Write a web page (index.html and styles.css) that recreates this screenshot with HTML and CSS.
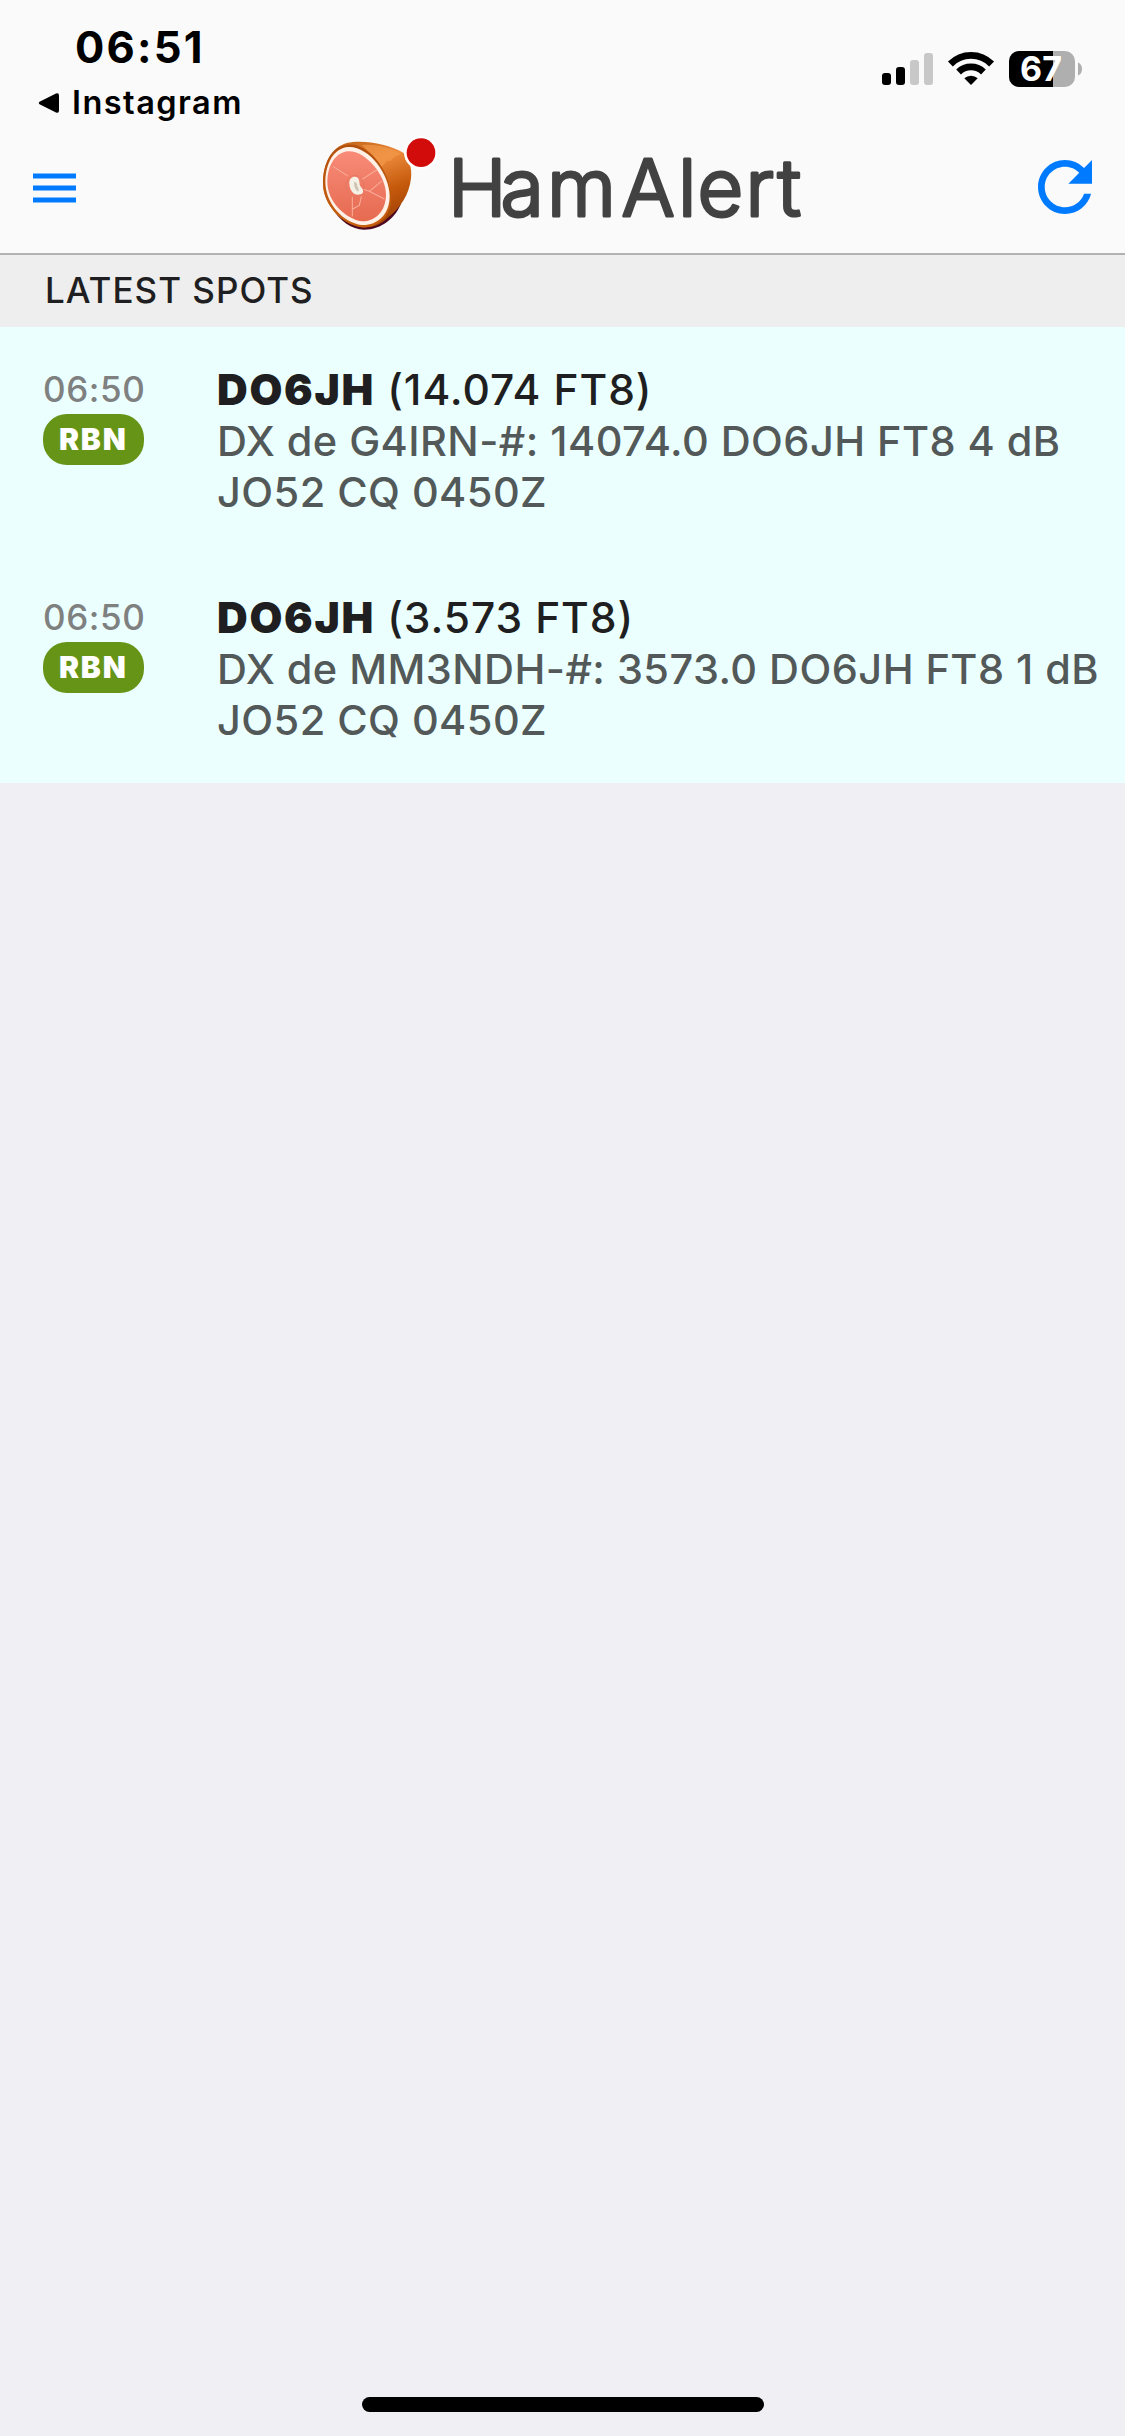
FILE: index.html
```html
<!DOCTYPE html>
<html lang="en">
<head>
<meta charset="utf-8">
<title>HamAlert</title>
<link rel="stylesheet" href="styles.css">
</head>
<body>
<div class="screen">
  <div class="status">
    <div class="status-left">
      <div class="clock">06:51</div>
      <div class="back">
        <svg class="back-arrow" width="22" height="22" viewBox="0 0 22 22"><path d="M2.5 9.2 L18 1.5 Q21 .6 21 3.5 V18.5 Q21 21.6 18 20.5 L2.5 12.8 Q-1 11 2.5 9.2Z"/></svg>
        <span>Instagram</span>
      </div>
    </div>
    <svg class="indicators" width="205" height="38" viewBox="0 0 205 38">
      <rect x="2" y="23" width="9" height="12" rx="3"/>
      <rect x="16" y="17" width="9" height="18" rx="3"/>
      <rect x="30" y="10" width="9" height="25" rx="3" fill="#c8c8c8"/>
      <rect x="44" y="3" width="9" height="32" rx="3" fill="#c8c8c8"/>
      <g fill="none" stroke="#000" stroke-width="6.8">
        <path d="M70.4 14 A28.8 28.8 0 0 1 111.6 14"/>
        <path d="M78.6 22 A17.8 17.8 0 0 1 103.4 22"/>
      </g>
      <path d="M91 35 L84.3 28.3 A9.8 9.8 0 0 1 97.7 28.3Z"/>
      <clipPath id="level"><rect x="129" y="1" width="44" height="36"/></clipPath>
      <rect x="129" y="1" width="66" height="36" rx="10" fill="#afafaf"/>
      <rect x="129" y="1" width="66" height="36" rx="10" clip-path="url(#level)"/>
      <path d="M198 12.5 Q202 14 202 19 Q202 24 198 25.5Z" fill="#afafaf"/>
      <text class="battery" x="161" y="31.3" text-anchor="middle">67</text>
    </svg>
  </div>

  <header class="navbar">
    <svg class="menu" width="43" height="30" viewBox="0 0 43 30"><path d="M0 .5H43V5.5H0ZM0 12.5H43V17.5H0ZM0 24.5H43V29.5H0Z"/></svg>
    <svg class="logo" width="485" height="110" viewBox="0 0 485 110">
      <defs>
        <linearGradient id="skin" x1="0.4" y1="0" x2="0.8" y2="1">
          <stop offset="0" stop-color="#c96a1c"/><stop offset=".25" stop-color="#ec8a3c"/>
          <stop offset=".6" stop-color="#c65a0c"/><stop offset="1" stop-color="#963c04"/>
        </linearGradient>
        <linearGradient id="meat" x1="0" y1="0" x2="0" y2="1">
          <stop offset="0" stop-color="#f88b78"/><stop offset="1" stop-color="#e66a50"/>
        </linearGradient>
        <linearGradient id="rim" x1="0" y1="0" x2="0" y2="1">
          <stop offset="0" stop-color="#b24f0c"/><stop offset="1" stop-color="#c8600f"/>
        </linearGradient>
      </defs>
      <g transform="scale(.33333)">
        <path d="M35 232 C60 275 95 299 132 299 C185 299 228 262 244 218Z" fill="#4e0922"/>
        <path d="M9 160 C9 100 35 52 80 39 C130 28 205 42 250 68 C266 85 277 112 273 145 C268 195 240 235 205 262 C180 288 150 295 122 292 C60 280 9 220 9 160Z" fill="url(#skin)"/>
        <path d="M125 45 C175 42 215 56 244 72 L228 78 L212 92 L200 94 L190 106 L174 124 C164 92 148 62 125 45Z" fill="#f39a4c" opacity=".65"/>
        <path d="M9 160 C9 100 35 47 82 44 C150 36 214 130 214 205 C212 262 172 295 125 292 C60 282 9 220 9 160Z" fill="url(#rim)"/>
        <path d="M16 155 C16 100 42 54 85 51 C146 48 209 132 209 200 C208 255 170 287 125 285 C68 277 16 220 16 155Z" fill="#fff1e8"/>
        <path d="M22 155 C22 105 48 67 84 64 C136 61 198 135 198 195 C197 245 165 275 125 274 C75 265 22 215 22 155Z" fill="url(#meat)"/>
        <g fill="none" stroke="#f9ac98" stroke-width="3.2" stroke-linecap="round" stroke-linejoin="round">
          <path d="M40 110 L82 137 M126 148 L170 120 M130 178 L148 184 L184 154 M148 184 L192 206 M97 200 V258 M97 238 L118 226 L124 200"/>
          <ellipse cx="105" cy="169" rx="27" ry="33" stroke="#df7662" stroke-width="2"/>
        </g>
        <path d="M88 160 C88 142 102 137 113 143 C120 150 117 160 121 169 C133 181 131 191 122 193 C104 199 89 185 88 160Z" fill="#f4f0e6"/>
        <path d="M102 156 Q112 156 112 169 Q119 180 115 185 Q102 180 102 156Z" fill="#cfc4b3"/>
        <circle cx="303" cy="68" r="51" fill="#fff"/>
        <circle cx="303" cy="68" r="43" fill="#d20b0b"/>
      </g>
      <text class="wordmark" x="128 180.5 227 301.5 358 377.5 425.5 457.5" y="86">HamAlert</text>
    </svg>
    <svg class="refresh" width="54" height="54" viewBox="4 4 16 16"><path d="M17.65 6.35A7.958 7.958 0 0 0 12 4c-4.42 0-7.99 3.58-7.99 8s3.57 8 7.99 8c3.73 0 6.84-2.55 7.73-6h-2.08A5.99 5.99 0 0 1 12 18c-3.31 0-6-2.69-6-6s2.69-6 6-6c1.66 0 3.14.69 4.22 1.78L13 11h7V4l-2.35 2.35z"/></svg>
  </header>

  <h2 class="section">LATEST SPOTS</h2>
  <main class="spots">
    <article class="spot">
      <div class="meta"><time>06:50</time><span class="badge">RBN</span></div>
      <div class="info">
        <div class="title"><b>DO6JH</b> (14.074 FT8)</div>
        <div class="desc">DX de G4IRN-#: 14074.0 DO6JH FT8 4 dB<br>JO52 CQ 0450Z</div>
      </div>
    </article>
    <article class="spot">
      <div class="meta"><time>06:50</time><span class="badge">RBN</span></div>
      <div class="info">
        <div class="title"><b>DO6JH</b> (3.573 FT8)</div>
        <div class="desc">DX de MM3NDH-#: 3573.0 DO6JH FT8 1 dB<br>JO52 CQ 0450Z</div>
      </div>
    </article>
  </main>
  <div class="home-indicator"></div>
</div>
</body>
</html>
```
FILE: styles.css
```css
* { box-sizing: border-box; }
body { margin: 0; font-family: Inter, "Liberation Sans", sans-serif; }
svg { display: block; flex: none; }
.screen {
  display: flex;
  flex-direction: column;
  width: 1125px;
  height: 2436px;
  background: #efeff4;
}
.status {
  display: flex;
  justify-content: space-between;
  align-items: flex-start;
  height: 132px;
  padding: 27px 40px 0 38px;
  background: #fafafa;
  color: #000;
}
.clock {
  padding-left: 37px;
  font-size: 43.5px;
  font-weight: 750;
  line-height: 40px;
  letter-spacing: 2.2px;
}
.back {
  display: flex;
  align-items: center;
  gap: 12px;
  margin-top: 16px;
  font-size: 32.5px;
  font-weight: 620;
  line-height: 40px;
  letter-spacing: 1.45px;
}
.indicators { margin-top: 23px; }
.battery { font-size: 34px; font-weight: 750; fill: #fff; }
.navbar {
  display: flex;
  justify-content: space-between;
  height: 123px;
  padding: 0 33px;
  background: #fafafa;
  border-bottom: 2px solid #b2b2b2;
}
.menu, .refresh { fill: #007aff; }
.menu { margin-top: 41px; }
.logo { margin: -2px 0 0 11px; }
.refresh { margin-top: 28px; }
.wordmark {
  font-size: 79px;
  font-weight: 300;
  fill: #424242;
  stroke: #424242;
  stroke-width: 3;
  stroke-linejoin: round;
}
.section {
  height: 72px;
  margin: 0;
  padding-left: 45px;
  background: #eee;
  color: #1f1f21;
  font-size: 35px;
  font-weight: 540;
  line-height: 70px;
  letter-spacing: 1px;
}
.spot {
  display: flex;
  height: 228px;
  padding: 37px 0 0 43px;
  background: #ebffff;
}
.meta {
  display: flex;
  flex-direction: column;
  gap: 7px;
  width: 174px;
  padding-top: 7px;
}
.meta time {
  color: #7f8080;
  font-size: 35px;
  font-weight: 530;
  line-height: 36px;
  letter-spacing: .6px;
}
.badge {
  width: 101px;
  height: 51px;
  padding-left: 16px;
  border-radius: 24px;
  background: #669417;
  color: #fff;
  font-size: 30px;
  font-weight: 900;
  line-height: 51px;
  letter-spacing: 1.8px;
}
.info { line-height: 51px; white-space: nowrap; }
.title {
  color: #1f1f21;
  font-size: 42.5px;
  font-weight: 530;
  letter-spacing: .9px;
}
.title b { font-weight: 900; letter-spacing: 1.7px; }
.desc {
  padding-top: 1px;
  color: #525958;
  font-size: 41.5px;
  font-weight: 530;
  letter-spacing: .44px;
}
.home-indicator {
  width: 402px;
  height: 15px;
  margin: auto auto 24px;
  border-radius: 8px;
  background: #000;
}
```
